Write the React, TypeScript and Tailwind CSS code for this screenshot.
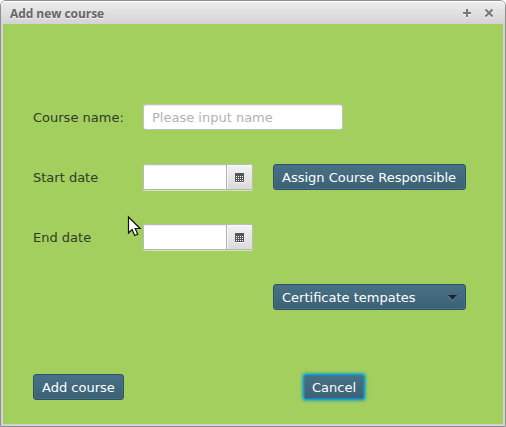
import type { ReactNode } from "react";

const buttonBase =
  "flex h-[26px] items-center rounded-[3px] border bg-linear-to-b from-[#487186] to-[#3c6174] px-2 pt-px text-white whitespace-nowrap";

function Button({ children, className = "" }: { children: ReactNode; className?: string }) {
  return (
    <button type="button" className={`${buttonBase} border-[#2f5165] shadow-[inset_0_0_0_1px_#44708a] ${className}`}>
      {children}
    </button>
  );
}

function CalendarIcon() {
  return (
    <svg width="9" height="10" viewBox="0 0 9 10" shapeRendering="crispEdges">
      <path d="M0 9h9v1H0z" fill="#fff" />
      <path d="M0 0h9v9H0z" fill="#555" />
      {[3, 5, 7].map((y) => [1, 3, 5, 7].map((x) => <rect key={`${x}-${y}`} x={x} y={y} width="1" height="1" fill="#fff" />))}
    </svg>
  );
}

function DateField() {
  return (
    <div className="flex h-[26px] w-[110px] overflow-hidden rounded-[2px] border border-[#b9bcb7] border-b-[#b5b5b5] bg-white shadow-[0_1px_0_#d1e7b0]">
      <input className="w-[82px] bg-transparent px-2 shadow-[inset_0_1px_0_#eee] outline-none" />
      <div className="flex flex-1 items-center justify-center border-l border-[#b0b0b0] bg-linear-to-b from-[#f3f3f3] to-[#dadada] pt-[2px] shadow-[inset_1px_1px_0_#f8f8f8]">
        <CalendarIcon />
      </div>
    </div>
  );
}

function FormRow({ label, children }: { label?: string; children: ReactNode }) {
  return (
    <div className="flex h-[26px] items-center">
      <div className="w-[110px] shrink-0 pt-px whitespace-nowrap">{label}</div>
      {children}
    </div>
  );
}

export default function App() {
  return (
    <div className="relative h-[427px] w-[506px] bg-white font-['DejaVu_Sans',sans-serif] text-[13px] leading-4 text-[#323a28]">
      <div className="flex h-full flex-col rounded-t-[6px] border border-[#8e8e8e] bg-[#d3d3d3] px-[2px] pb-[2px]">
        <header className="-mx-[2px] flex h-[23px] shrink-0 items-center rounded-t-[5px] bg-linear-to-b from-[#eeeeee] to-[#d3d3d3] pr-[12px] pl-[9px] shadow-[inset_0_1px_0_#fff]">
          <h1 className="flex-1 pt-[2px] font-['Open_Sans',sans-serif] text-[12px] font-bold tracking-[-0.06px] text-[#666] [text-shadow:0_1px_0_#f4f4f4]">
            Add new course
          </h1>
          <svg width="31" height="11" viewBox="0 0 31 11" className="mt-[2px]" fill="none" stroke="#777" strokeWidth="2">
            <path d="M1 6h8M5 2v8M23.500 2.500l7 7M30.500 2.500l-7 7" stroke="#fff" strokeWidth="1.500" />
            <path d="M1 5h8M5 1v8M23.500 1.500l7 7M30.500 1.500l-7 7" />
          </svg>
        </header>
        <main className="flex flex-1 flex-col gap-[34px] bg-[#a3cf5f] pt-[80px] pl-[30px]">
          <FormRow label="Course name:">
            <input
              placeholder="Please input name"
              className="h-[26px] w-[200px] rounded-[3px] border border-[#c0c4bd] bg-white px-2 pt-px shadow-[inset_0_1px_0_#eee] outline-none placeholder:text-[#b2b2b2]"
            />
          </FormRow>
          <FormRow label="Start date">
            <DateField />
            <Button className="ml-5 w-[193px]">Assign Course Responsible</Button>
          </FormRow>
          <FormRow label="End date">
            <DateField />
          </FormRow>
          <FormRow>
            <Button className="ml-[130px] w-[193px] justify-between">
              Certificate tempates
              <svg width="9" height="6" viewBox="0 0 9 6">
                <path d="M0 1h9L4.500 6z" fill="#6c8d9d" />
                <path d="M0 0h9L4.500 5z" fill="#17272f" />
              </svg>
            </Button>
          </FormRow>
          <div className="mt-[30px] flex">
            <Button className="w-[91px]">Add course</Button>
            <button
              type="button"
              className={`${buttonBase} ml-[179px] w-[62px] border-[#10a2d3] shadow-[inset_0_0_0_1px_#2a84a5,0_0_3px_0.5px_#2fa0a8]`}
            >
              Cancel
            </button>
          </div>
        </main>
      </div>
      <svg className="absolute top-[215px] left-[127px]" width="15" height="22" viewBox="0 0 15 22">
        <path
          d="M1.500 2v16l3.600-3.400L7.700 20.500l3-1.300-2.500-5.700h4.900z"
          fill="#fff"
          stroke="#111"
          strokeWidth="1.200"
        />
      </svg>
    </div>
  );
}
